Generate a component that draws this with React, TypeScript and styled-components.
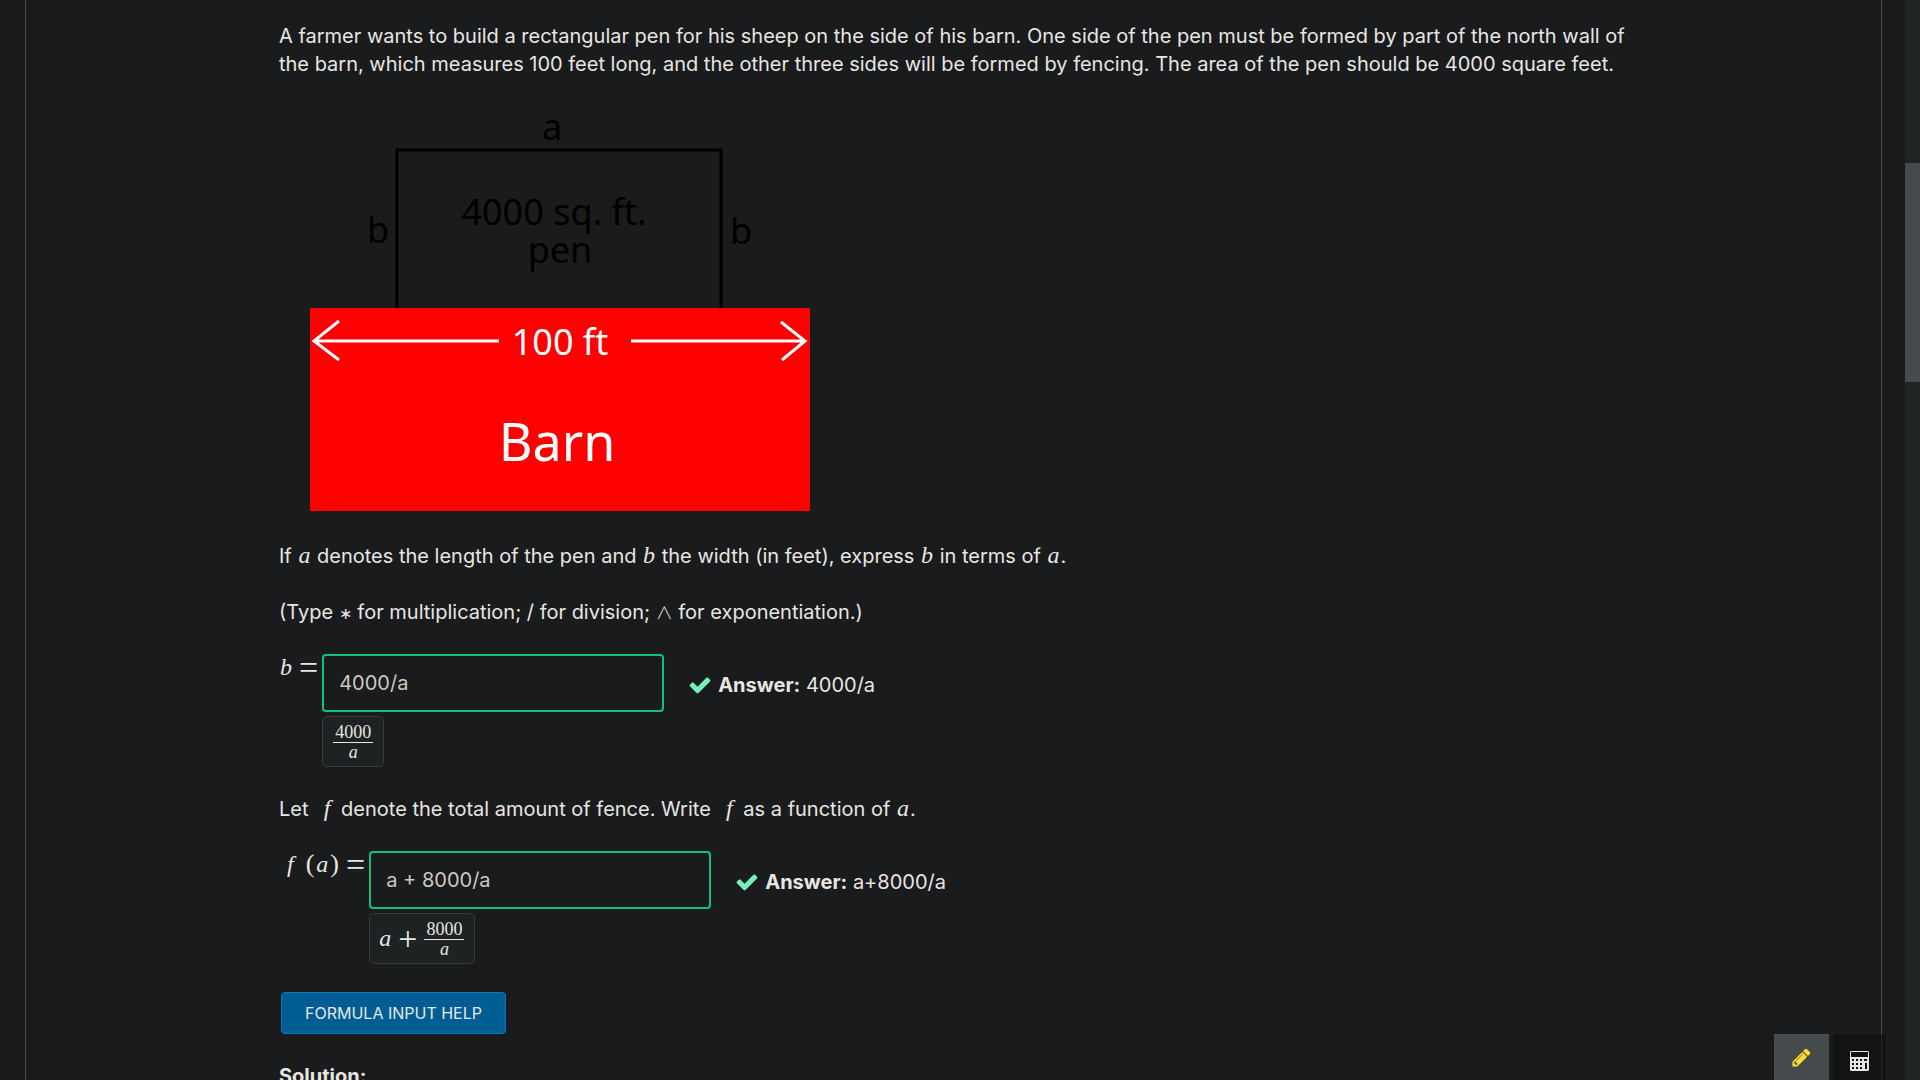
import React from "react";
import styled, { createGlobalStyle } from "styled-components";

const GlobalStyle = createGlobalStyle`
  *, *::before, *::after { box-sizing: border-box; }
  html, body { margin: 0; background: #1a1b1c; }
  body {
    height: 100vh;
    overflow: hidden;
    color: #e8e6e3;
    font: 400 20px/28px Inter, sans-serif;
  }
`;

const Page = styled.div`
  display: flex;
  height: 100vh;
  overflow: hidden;
`;

const Sheet = styled.main`
  flex: 1;
  min-width: 0;
  margin: 0 23px 0 25px;
  border: solid #4a4c4e;
  border-width: 0 1px;
`;

const Problem = styled.article`
  display: flex;
  flex-direction: column;
  gap: 28px;
  max-width: 1349px;
  margin: 0 auto;
  padding-top: 22px;
`;

const Text = styled.p`
  margin: 0;
`;

const MathText = styled.span`
  font-family: "Liberation Serif", serif;
  font-size: 24px;
  line-height: 20px;
`;

const Variable = styled.i<{ $wide?: boolean }>`
  padding: ${(p) => (p.$wide ? "0 5px 0 4px" : "0 1px")};
`;

const Operator = styled.span`
  font: 34px/20px "Liberation Serif", serif;
  vertical-align: -4px;
`;

const Paren = styled.span`
  padding: 0 1px;
  font-size: 26px;
`;

const Star = styled.span`
  font: 16px/20px "Liberation Serif", serif;
`;

const Wedge = styled.span`
  font: 300 17px/20px "Noto Sans CJK JP", sans-serif;
`;

const Figure = styled.svg`
  display: block;
  width: 500px;
  height: 408px;
  margin-left: 31px;
  overflow: visible;
  font-family: "Noto Sans", sans-serif;
  font-size: 36px;
  text-anchor: middle;
`;

const Row = styled.div`
  display: flex;
  align-items: flex-start;
`;

const Label = styled.label<{ $indent?: boolean }>`
  height: 28px;
  padding: 0 4px 0 ${(p) => (p.$indent ? "4px" : "0")};
  white-space: nowrap;
`;

const Field = styled.div`
  display: flex;
  flex-direction: column;
  align-items: flex-start;
  gap: 4px;
`;

const Input = styled.input`
  width: 342px;
  height: 58px;
  padding: 0 15px;
  border: 2px solid #12c27a;
  border-radius: 4px;
  outline: none;
  background: #1a1b1c;
  color: #cdc8c2;
  font: inherit;
`;

const Preview = styled.div`
  display: flex;
  align-items: center;
  gap: 5px;
  height: 51px;
  padding: 0 8px;
  border: 1px solid #373b3d;
  border-radius: 5px;
  background: #1f2223;
`;

const Fraction = styled.span`
  display: flex;
  flex-direction: column;
  align-items: center;
  padding: 0 2px;
  font: 18px/18px "Liberation Serif", serif;
`;

const Numerator = styled.span`
  padding: 0 2px 1px;
  border-bottom: 1px solid #e8e6e3;
`;

const Answer = styled.div`
  display: flex;
  align-items: center;
  gap: 6px;
  padding: 17px 0 0 24px;
`;

const HelpButton = styled.button`
  align-self: flex-start;
  height: 42px;
  margin-left: 2px;
  padding: 0 23px;
  border: 1px solid #0079c2;
  border-radius: 4px;
  background: #005d94;
  color: #e8e6e3;
  font: 16px/24px Inter, sans-serif;
  text-transform: uppercase;
`;

const ScrollTrack = styled.div`
  width: 15px;
  padding-top: 163px;
  background: #202324;
`;

const ScrollThumb = styled.div`
  height: 219px;
  background: #454a4d;
`;

const Tools = styled.div`
  position: fixed;
  right: 34px;
  bottom: 0;
  display: flex;
  gap: 4px;
`;

const ToolButton = styled.button<{ $active?: boolean }>`
  display: flex;
  align-items: center;
  justify-content: center;
  width: ${(p) => (p.$active ? "55px" : "53px")};
  height: 46px;
  padding: ${(p) => (p.$active ? "0" : "8px")} 0 0;
  border: 0;
  background: ${(p) => (p.$active ? "#454a4d" : "rgba(14, 15, 16, 0.6)")};
  color: ${(p) => (p.$active ? "#fde12d" : "#e8e6e3")};
`;

const A = () => <Variable>a</Variable>;
const B = () => <Variable>b</Variable>;
const F = () => <Variable $wide>f</Variable>;
const M = ({ children }: { children: React.ReactNode }) => <MathText>{children}</MathText>;

function BarnFigure() {
  return (
    <Figure viewBox="0 0 500 408" role="img" aria-label="Pen next to the barn">
      <path d="M87 202V44H411V202" fill="none" stroke="#000" strokeWidth="3" />
      <rect y="202" width="500" height="203" fill="#f00" />
      <g fill="#000">
        <text x="242" y="34">a</text>
        <text x="68" y="137">b</text>
        <text x="431" y="138">b</text>
        <text>
          <tspan x="244" y="119">4000 sq. ft.</tspan>
          <tspan x="250" y="157">pen</tspan>
        </text>
      </g>
      <g fill="none" stroke="#fff" strokeWidth="3">
        <path d="M189 235H4M29 215L4 235L29 254" />
        <path d="M321 235H495M471 216L495 235L472 254" />
      </g>
      <g fill="#fff">
        <text x="250" y="249">100 ft</text>
        <text x="247" y="355" fontSize="52">Barn</text>
      </g>
    </Figure>
  );
}

function CheckIcon() {
  return (
    <svg width="24" height="24" viewBox="0 0 1792 1792" fill="#75f0bd" aria-hidden="true">
      <path d="M1671 566q0 40-28 68l-724 724-136 136q-28 28-68 28t-68-28l-136-136-362-362q-28-28-28-68t28-68l136-136q28-28 68-28t68 28l294 295 656-657q28-28 68-28t68 28l136 136q28 28 28 68z" />
    </svg>
  );
}

function PencilIcon() {
  return (
    <svg width="21" height="21" viewBox="0 0 1792 1792" fill="currentColor" aria-hidden="true">
      <path d="M491 1536l91-91-235-235-91 91v107h128v128h107zm523-928q0-22-22-22-10 0-17 7l-542 542q-7 7-7 17 0 22 22 22 10 0 17-7l542-542q7-7 7-17zm-54-192l416 416-832 832h-416v-416zm683 96q0 53-37 90l-166 166-416-416 166-165q36-38 90-38 53 0 91 38l235 234q37 39 37 91z" />
    </svg>
  );
}

function CalculatorIcon() {
  return (
    <svg width="19" height="20" viewBox="0 0 19 20" aria-hidden="true">
      <path
        fill="currentColor"
        fillRule="evenodd"
        d="M1 0H18L19 1V19L18 20H1L0 19V1ZM1 1V6H18V1ZM2 8V10H4V8ZM6 8V10H8V8ZM10 8V10H12V8ZM14 8V10H17V8ZM2 12V14H4V12ZM6 12V14H8V12ZM10 12V14H12V12ZM15 12V18H17V12ZM2 16V18H4V16ZM6 16V18H8V16ZM10 16V18H12V16Z"
      />
    </svg>
  );
}

function Result({ children }: { children: React.ReactNode }) {
  return (
    <Answer>
      <CheckIcon />
      <span>
        <b>Answer:</b> {children}
      </span>
    </Answer>
  );
}

function Over({ top }: { top: string }) {
  return (
    <Fraction>
      <Numerator>{top}</Numerator>
      <A />
    </Fraction>
  );
}

export default function App() {
  return (
    <Page>
      <GlobalStyle />
      <Sheet>
        <Problem>
          <Text>
            A farmer wants to build a rectangular pen for his sheep on the side of his barn. One side of the pen must
            be formed by part of the north wall of the barn, which measures 100 feet long, and the other three sides
            will be formed by fencing. The area of the pen should be 4000 square feet.
          </Text>
          <BarnFigure />
          <Text>
            If <M><A /></M> denotes the length of the pen and <M><B /></M> the width (in feet), express{" "}
            <M><B /></M> in terms of <M><A /></M>.
          </Text>
          <Text>
            (Type <Star>∗</Star> for multiplication; / for division; <Wedge>∧</Wedge> for exponentiation.)
          </Text>
          <Row>
            <Label htmlFor="width"><M><B /> <Operator>=</Operator></M></Label>
            <Field>
              <Input id="width" defaultValue="4000/a" />
              <Preview><Over top="4000" /></Preview>
            </Field>
            <Result>4000/a</Result>
          </Row>
          <Text>
            Let &nbsp;<M><F /></M> denote the total amount of fence. Write &nbsp;<M><F /></M> as a function of{" "}
            <M><A /></M>.
          </Text>
          <Row>
            <Label htmlFor="fence" $indent>
              <M><F /> <Paren>(</Paren><A /><Paren>)</Paren> <Operator>=</Operator></M>
            </Label>
            <Field>
              <Input id="fence" defaultValue="a + 8000/a" />
              <Preview>
                <M><A /> <Operator>+</Operator></M>
                <Over top="8000" />
              </Preview>
            </Field>
            <Result>a+8000/a</Result>
          </Row>
          <HelpButton type="button">Formula input help</HelpButton>
          <Text><b>Solution:</b></Text>
        </Problem>
      </Sheet>
      <ScrollTrack><ScrollThumb /></ScrollTrack>
      <Tools>
        <ToolButton type="button" $active aria-label="Edit"><PencilIcon /></ToolButton>
        <ToolButton type="button" aria-label="Calculator"><CalculatorIcon /></ToolButton>
      </Tools>
    </Page>
  );
}
